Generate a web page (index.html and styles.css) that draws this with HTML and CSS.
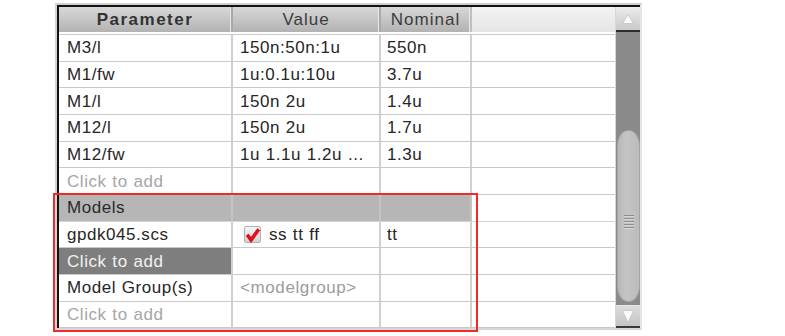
FILE: index.html
```html
<!DOCTYPE html>
<html>
<head>
<meta charset="utf-8">
<link rel="stylesheet" href="styles.css">
</head>
<body>
<div class="frame">
  <div class="inner">
    <div class="table">
      <div class="row head">
        <div class="c c1 h bold">Parameter</div>
        <div class="c c2 h">Value</div>
        <div class="c c3 h">Nominal</div>
        <div class="fill hfill"></div>
      </div>
      <div class="hsep"></div>
      <div class="row"><div class="c c1">M3/l</div><div class="c c2">150n:50n:1u</div><div class="c c3">550n</div><div class="fill"></div></div>
      <div class="row"><div class="c c1">M1/fw</div><div class="c c2">1u:0.1u:10u</div><div class="c c3">3.7u</div><div class="fill"></div></div>
      <div class="row"><div class="c c1">M1/l</div><div class="c c2">150n 2u</div><div class="c c3">1.4u</div><div class="fill"></div></div>
      <div class="row"><div class="c c1">M12/l</div><div class="c c2">150n 2u</div><div class="c c3">1.7u</div><div class="fill"></div></div>
      <div class="row"><div class="c c1">M12/fw</div><div class="c c2">1u 1.1u 1.2u ...</div><div class="c c3">1.3u</div><div class="fill"></div></div>
      <div class="row"><div class="c c1 ph">Click to add</div><div class="c c2"></div><div class="c c3"></div><div class="fill"></div></div>
      <div class="row group"><div class="c c1">Models</div><div class="c c2"></div><div class="c c3"></div><div class="fill"></div></div>
      <div class="row"><div class="c c1">gpdk045.scs</div><div class="c c2"><span class="check"><svg width="17" height="17" viewBox="0 0 17 17"><path d="M3.2 8.8 L7 14 L14.8 3.2" fill="none" stroke="#e01018" stroke-width="3.6" stroke-linejoin="miter" stroke-linecap="butt"/></svg></span>ss tt ff</div><div class="c c3">tt</div><div class="fill"></div></div>
      <div class="row"><div class="c c1 sel">Click to add</div><div class="c c2"></div><div class="c c3"></div><div class="fill"></div></div>
      <div class="row"><div class="c c1">Model Group(s)</div><div class="c c2 ph">&lt;modelgroup&gt;</div><div class="c c3"></div><div class="fill"></div></div>
      <div class="row"><div class="c c1 ph">Click to add</div><div class="c c2"></div><div class="c c3"></div><div class="fill"></div></div>
    </div>
    <div class="scroll">
      <div class="btn up"><svg width="12" height="10" viewBox="0 0 12 10"><polygon points="6,0.5 11.5,9.5 0.5,9.5" fill="#fafafa" stroke="#b8b8b8" stroke-width="0.6"/></svg></div>
      <div class="track">
        <div class="thumb">
          <div class="grip"><span></span><span></span><span></span><span></span><span></span></div>
        </div>
      </div>
      <div class="btn down"><svg width="12" height="13" viewBox="0 0 12 13"><polygon points="0.5,0.5 11.5,0.5 6,12.5" fill="#fafafa" stroke="#b8b8b8" stroke-width="0.6"/></svg></div>
    </div>
  </div>
</div>
<div class="mark"></div>
</body>
</html>
```

FILE: styles.css
```css
html, body {
  margin: 0;
  padding: 0;
  background: #ffffff;
}
body {
  position: relative;
  width: 785px;
  height: 336px;
  overflow: hidden;
  font-family: "Liberation Sans", Arial, sans-serif;
}
.frame {
  margin: 3px 0 0 55px;
  width: 587px;
  box-sizing: border-box;
  border-top: 2px solid #cfcfcf;
  border-left: 2px solid #d4d4d4;
  border-right: 2px solid #e4e4e4;
  border-bottom: 2px solid #d6d6d6;
}
.inner {
  display: flex;
  border-top: 2px solid #121212;
  border-left: 2px solid #121212;
}
.table {
  width: 556px;
  flex: none;
}
.row {
  display: flex;
  height: 26.667px;
  box-sizing: border-box;
  border-bottom: 1px solid #c9c9c9;
}
.c {
  box-sizing: border-box;
  height: 100%;
  border-right: 2px solid #d0d0d0;
  font-size: 17px;
  letter-spacing: 0.55px;
  word-spacing: 0.5px;
  line-height: 27px;
  color: #262626;
  white-space: nowrap;
  overflow: hidden;
  display: flex;
  align-items: center;
}
.c1 { width: 174px; padding-left: 8px; }
.c2 { width: 148px; padding-left: 7px; }
.c3 { width: 91px; padding-left: 6px; }
.fill { flex: 1; }

.row.head {
  height: 25px;
  border-bottom: none;
}
.c.h {
  justify-content: center;
  padding-left: 0;
  background: linear-gradient(#d8d8d8, #b2b2b2);
  border-right: 2px solid #a8a8a8;
  box-shadow: inset -1px 0 0 #e8e8e8;
  color: #3c3c3c;
  font-size: 17px;
  letter-spacing: 1px;
  line-height: 25px;
}
.c.h.bold {
  font-weight: bold;
  letter-spacing: 1.5px;
  color: #333;
}
.c3.h {
  border-right: 2px solid #c0c0c0;
}
.hfill {
  background: linear-gradient(#f3f3f3, #e5e5e5);
}
.hsep {
  height: 3px;
  box-sizing: border-box;
  background: #ffffff;
  border-bottom: 1px solid #c9c9c9;
}
.ph {
  color: #a6a6a6;
}
.c2.ph {
  color: #9c9c9c;
  letter-spacing: 0.6px;
}
.row.group .c {
  background: #b6b6b6;
  border-right-color: #c4c4c4;
  color: #2a2a2a;
}
.row.group {
  border-bottom-color: #d4d4d4;
}
.c.sel {
  background: #7e7e7e;
  color: #f2f2f2;
}
.check {
  display: inline-block;
  width: 17px;
  height: 17px;
  box-sizing: border-box;
  margin: 0 8px 0 4px;
  border: 1px solid #b0b0b0;
  border-radius: 2px;
  background: linear-gradient(#f6f6f6, #d2d2d2);
  position: relative;
}
.check svg {
  position: absolute;
  left: -1px;
  top: -1px;
}

.scroll {
  width: 25px;
  flex: none;
  display: flex;
  flex-direction: column;
  border-left: 1px solid #d8d8d8;
  box-sizing: border-box;
}
.btn {
  display: flex;
  align-items: center;
  justify-content: center;
  background: linear-gradient(#ececec, #c9c9c9);
  box-sizing: border-box;
}
.btn.up {
  height: 25px;
  border-bottom: 2px solid #2e2e2e;
}
.btn.down {
  height: 23px;
  border-top: 1px solid #e6e6e6;
  border-bottom: 2px solid #3a3a3a;
  background: linear-gradient(#dcdcdc, #c4c4c4);
}
.track {
  flex: 1;
  background: #8a8a8a;
  padding: 98px 0 3px 1px;
  box-sizing: border-box;
  display: flex;
  flex-direction: column;
}
.thumb {
  height: 172px;
  background: linear-gradient(90deg, #b8b8b8, #c4c4c4 40%, #bcbcbc);
  border: 1px solid #a4a4a4;
  border-radius: 11px / 16px;
  box-sizing: border-box;
  display: flex;
  align-items: center;
  justify-content: center;
}
.grip {
  display: flex;
  flex-direction: column;
  gap: 1px;
  margin-top: 12px;
}
.grip span {
  display: block;
  width: 10px;
  height: 2px;
  background: #8e8e8e;
  border-bottom: 1px solid #d6d6d6;
  box-sizing: border-box;
}

.mark {
  position: absolute;
  left: 53px;
  top: 193px;
  width: 425px;
  height: 139px;
  box-sizing: border-box;
  border: 2px solid #ee2a2a;
  pointer-events: none;
}
```
